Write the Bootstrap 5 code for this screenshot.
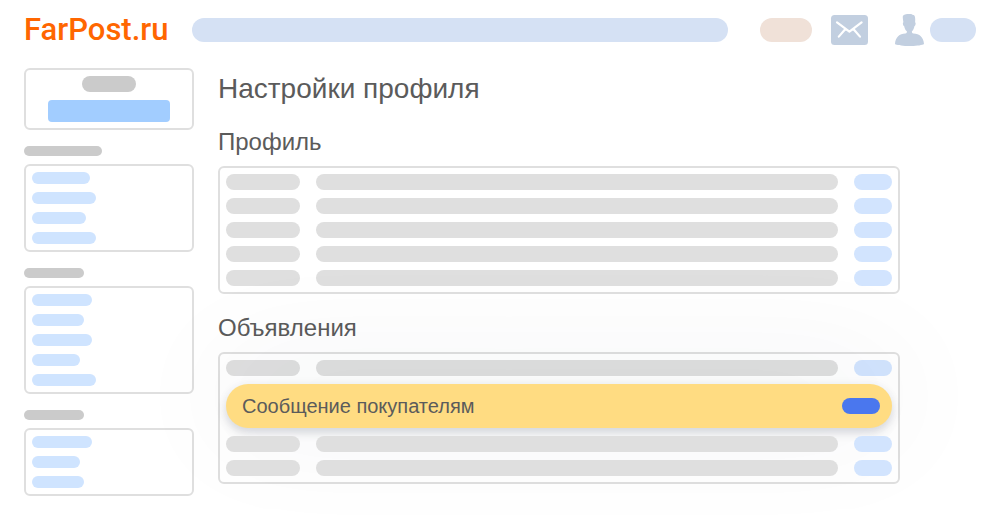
<!DOCTYPE html>
<html lang="ru">
<head>
<meta charset="utf-8">
<meta name="viewport" content="width=device-width, initial-scale=1">
<title>Настройки профиля</title>
<link href="https://cdn.jsdelivr.net/npm/bootstrap@5.3.0/dist/css/bootstrap.min.css" rel="stylesheet">
<style>
body { font-family: "Liberation Sans", Arial, sans-serif; color: #5b5b5b; background: #fff; }
.topbar { min-height: 60px; }
.logo { width: 168px; font: 500 31px/40px Roboto, sans-serif; color: #ff6600; }
.search { height: 24px; background: #d5e1f4; min-width: 0; outline-offset: 2px; }
.city { width: 52px; height: 24px; background: #f0e1d8; margin-left: 32px; }
.mail { margin-left: 18px; }
.user { margin-left: 26px; gap: 6px; }
.user-name { width: 46px; height: 24px; background: #d5e1f4; }
.side { width: 170px; }
.frame { border: 2px solid #dfdfdf; border-radius: 6px; padding: 6px; }
.avatar-name { width: 54px; height: 16px; background: #cbcbcb; }
.post-btn { width: 122px; height: 22px; background: #a2cdff; border-radius: 4px; }
.side-title { height: 10px; background: #cbcbcb; margin: 16px 0 8px; }
.side-link { height: 12px; background: #cfe4ff; }
.w48 { width: 48px; } .w52 { width: 52px; } .w54 { width: 54px; } .w58 { width: 58px; }
.w60 { width: 60px; } .w64 { width: 64px; } .w78 { width: 78px; }
.content { padding-right: 76px; min-width: 0; }
h1 { font-size: 28px; line-height: 42px; font-weight: 400; margin: 0; }
h2 { font-size: 24px; line-height: 32px; font-weight: 400; margin: 18px 0 8px; }
h1 + h2 { margin-top: 16px; }
.bar { height: 16px; background: #dfdfdf; }
.bar-name { width: 74px; }
.bar-edit { width: 38px; background: #d2e4fe; }
.message { height: 44px; font-size: 20px; line-height: 24px; padding: 0 12px 0 16px; background: #ffdc82;
  box-shadow: 0 5px 10px rgba(60, 64, 90, .18), 0 0 12px rgba(60, 64, 90, .04), 0 -10px 120px 12px rgba(40, 48, 60, .06); }
.toggle-pill { width: 38px; height: 16px; background: #4a77ee; }
</style>
</head>
<body>
<header class="topbar d-flex align-items-center px-4">
  <a class="logo flex-shrink-0 text-decoration-none" href="#">FarPost.ru</a>
  <input class="search flex-grow-1 border-0 rounded-pill px-3" type="search" aria-label="Поиск">
  <button class="city flex-shrink-0 border-0 rounded-pill" type="button" aria-label="Город"></button>
  <a class="mail flex-shrink-0 d-flex" href="#" aria-label="Сообщения">
    <svg width="38" height="30" viewBox="0 0 38 30"><rect x="1" width="37" height="30" rx="3.5" fill="#c2cfe0"/><path d="M7 7.3 19.4 16.6 31.6 7.3M15.2 14.2 8.800 21.600M23.600 14.200 30 21.600" fill="none" stroke="#fff" stroke-width="2.2" stroke-linecap="round" stroke-linejoin="round"/></svg>
  </a>
  <a class="user flex-shrink-0 d-flex align-items-center" href="#" aria-label="Профиль">
    <svg width="30" height="32" viewBox="0 0 30 32"><path fill="#c2cfe0" d="M9 1.7C10 .4 12 .2 13 0h4c1 0 1.500 1 2.600 1.100 1.600.5 1.800 3 1.500 7.100 1 .5.500 3.600-.7 4-.3 2.300-1.300 4-2.500 5.100 0 1.300.1 1.900 1.500 2.200C25.500 19.800 29.500 23 30 30c-3.500 2.700-26 2.700-29 0 .5-7 4.500-10.200 10.400-10.500 1.400-.3 1.500-.9 1.500-2.200-1.300-1.100-2.400-2.800-2.700-5.100-1.300-.4-1.800-3.500-.8-4C8.900 5.500 8.500 3 9 1.700z"/></svg>
    <span class="user-name rounded-pill"></span>
  </a>
</header>

<div class="d-flex align-items-start gap-4 px-4 pt-2 pb-4">
  <aside class="side flex-shrink-0">
    <div class="frame d-flex flex-column align-items-center gap-2">
      <div class="avatar-name rounded-pill"></div>
      <button class="post-btn border-0" type="button" aria-label="Подать объявление"></button>
    </div>
    <div class="side-title rounded-pill w78"></div>
    <nav class="frame d-flex flex-column gap-2">
      <div class="side-link rounded-pill w58"></div>
      <div class="side-link rounded-pill w64"></div>
      <div class="side-link rounded-pill w54"></div>
      <div class="side-link rounded-pill w64"></div>
    </nav>
    <div class="side-title rounded-pill w60"></div>
    <nav class="frame d-flex flex-column gap-2">
      <div class="side-link rounded-pill w60"></div>
      <div class="side-link rounded-pill w52"></div>
      <div class="side-link rounded-pill w60"></div>
      <div class="side-link rounded-pill w48"></div>
      <div class="side-link rounded-pill w64"></div>
    </nav>
    <div class="side-title rounded-pill w60"></div>
    <nav class="frame d-flex flex-column gap-2">
      <div class="side-link rounded-pill w60"></div>
      <div class="side-link rounded-pill w48"></div>
      <div class="side-link rounded-pill w52"></div>
    </nav>
  </aside>

  <main class="content flex-grow-1">
    <h1>Настройки профиля</h1>
    <h2>Профиль</h2>
    <section class="frame d-flex flex-column gap-2">
      <div class="d-flex gap-3"><div class="bar bar-name rounded-pill"></div><div class="bar flex-grow-1 rounded-pill"></div><div class="bar bar-edit rounded-pill"></div></div>
      <div class="d-flex gap-3"><div class="bar bar-name rounded-pill"></div><div class="bar flex-grow-1 rounded-pill"></div><div class="bar bar-edit rounded-pill"></div></div>
      <div class="d-flex gap-3"><div class="bar bar-name rounded-pill"></div><div class="bar flex-grow-1 rounded-pill"></div><div class="bar bar-edit rounded-pill"></div></div>
      <div class="d-flex gap-3"><div class="bar bar-name rounded-pill"></div><div class="bar flex-grow-1 rounded-pill"></div><div class="bar bar-edit rounded-pill"></div></div>
      <div class="d-flex gap-3"><div class="bar bar-name rounded-pill"></div><div class="bar flex-grow-1 rounded-pill"></div><div class="bar bar-edit rounded-pill"></div></div>
    </section>
    <h2>Объявления</h2>
    <section class="frame d-flex flex-column gap-2">
      <div class="d-flex gap-3"><div class="bar bar-name rounded-pill"></div><div class="bar flex-grow-1 rounded-pill"></div><div class="bar bar-edit rounded-pill"></div></div>
      <div class="message d-flex align-items-center justify-content-between rounded-pill">
        <span>Сообщение покупателям</span>
        <button class="toggle-pill border-0 rounded-pill" type="button" aria-label="Изменить сообщение покупателям"></button>
      </div>
      <div class="d-flex gap-3"><div class="bar bar-name rounded-pill"></div><div class="bar flex-grow-1 rounded-pill"></div><div class="bar bar-edit rounded-pill"></div></div>
      <div class="d-flex gap-3"><div class="bar bar-name rounded-pill"></div><div class="bar flex-grow-1 rounded-pill"></div><div class="bar bar-edit rounded-pill"></div></div>
    </section>
  </main>
</div>
<script src="https://cdn.jsdelivr.net/npm/bootstrap@5.3.0/dist/js/bootstrap.bundle.min.js"></script>
</body>
</html>
